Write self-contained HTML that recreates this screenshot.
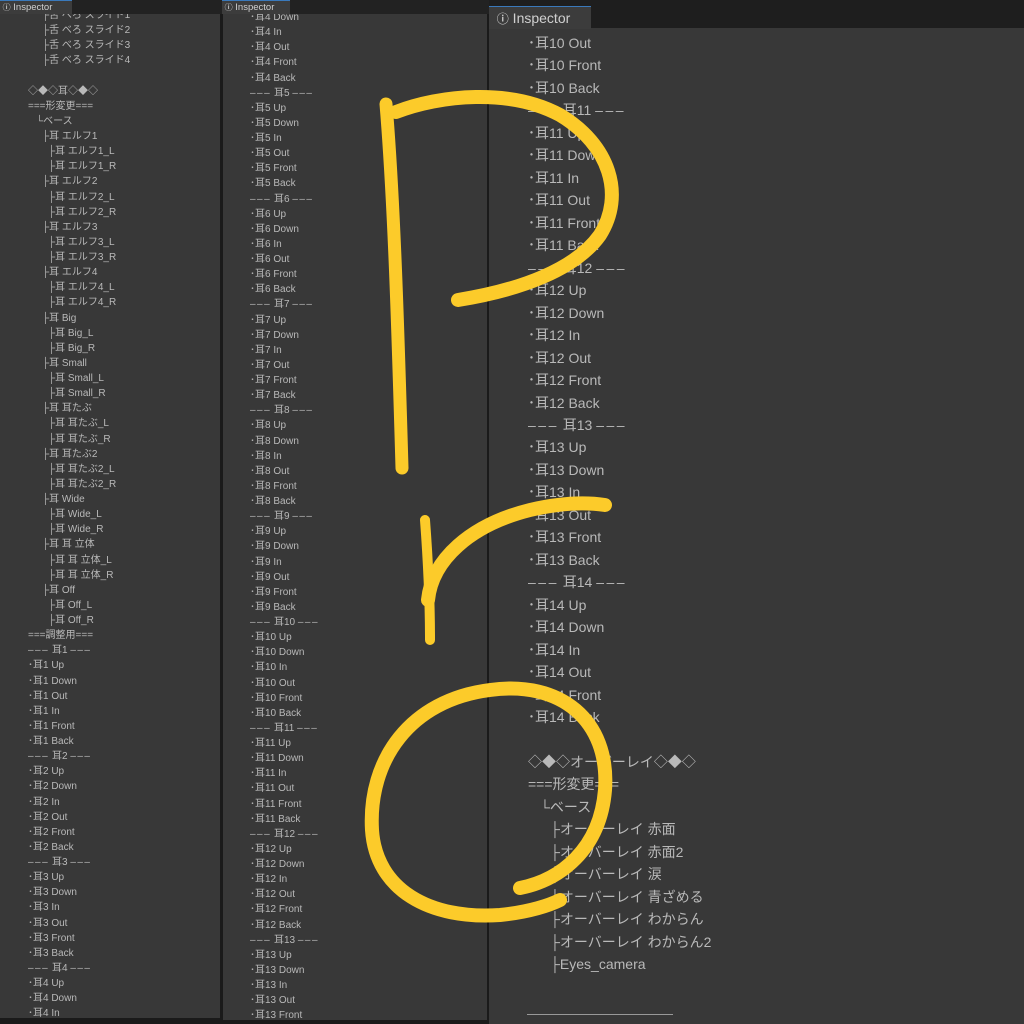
<!DOCTYPE html>
<html><head><meta charset="utf-8"><style>
body{margin:0;width:1024px;height:1024px;background:#1a1a1a;overflow:hidden;position:relative;font-family:"Liberation Sans","Noto Sans CJK JP",sans-serif;color:#b9b9b9}
.p{position:absolute;background:#383838;overflow:hidden}
.tab{position:absolute;background:#3c3c3c;border-top:1px solid #3a79bb;color:#d0d0d0}
.l{position:absolute;white-space:pre;}
.s{font-size:10px;line-height:15.14px}
.b{font-size:14px;line-height:22.47px}
.d{letter-spacing:1.5px}
.b .d{letter-spacing:2.5px}
</style></head><body>
<div class="p" style="left:0;top:0;width:220px;height:1018px"></div>
<div class="p" style="left:223px;top:0;width:264px;height:1020px"></div>
<div class="p" style="left:489px;top:28px;width:535px;height:996px"></div>
<div id="L" class="l s" style="left:0;top:8px"></div>
<div id="M" class="l s" style="left:223px;top:10px"></div>
<div id="R" class="l b" style="left:489px;top:32px"></div>
<div style="position:absolute;left:0;top:0;width:1024px;height:14px;background:#222"></div>
<div style="position:absolute;left:489px;top:0;width:535px;height:28px;background:#1e1e1e"></div>
<div class="tab" style="left:0;top:0;width:72px;height:13px;font-size:9.5px;line-height:14px">&nbsp;<b style="font-size:8px">ⓘ</b> Inspector</div>
<div class="tab" style="left:222px;top:0;width:68px;height:13px;font-size:9.5px;line-height:14px">&nbsp;<b style="font-size:8px">ⓘ</b> Inspector</div>
<div class="tab" style="left:489px;top:6px;width:102px;height:22px;font-size:14px;line-height:22px">&nbsp;&nbsp;<b style="font-size:12px">ⓘ</b> Inspector</div>
<div style="position:absolute;left:527px;top:1014px;width:146px;height:1px;background:#999"></div>
<script>
function put(id,lines,step){var el=document.getElementById(id),h='';lines.forEach(function(a){h+='<div style="padding-left:'+a[0]+'px;height:'+step+'px">'+a[1]+'</div>';});el.innerHTML=h;}
function hd(e){return '<span class="d">–––</span> 耳'+e+' <span class="d">–––</span>';}
var L=[[42,'├舌 べろ スライド1'],[42,'├舌 べろ スライド2'],[42,'├舌 べろ スライド3'],[42,'├舌 べろ スライド4'],[0,''],[28,'◇◆◇耳◇◆◇'],[28,'===形変更==='],[36,'└ベース']];
['エルフ1','エルフ2','エルフ3','エルフ4','Big','Small','耳たぶ','耳たぶ2','Wide','耳 立体','Off'].forEach(function(n){L.push([42,'├耳 '+n]);L.push([48,'├耳 '+n+'_L']);L.push([48,'├耳 '+n+'_R']);});
L.push([28,'===調整用===']);
L.push([28,hd(1)]);['Up','Down','Out','In','Front','Back'].forEach(function(x){L.push([28,'･耳1 '+x]);});
[2,3].forEach(function(e){L.push([28,hd(e)]);['Up','Down','In','Out','Front','Back'].forEach(function(x){L.push([28,'･耳'+e+' '+x]);});});
L.push([28,hd(4)]);['Up','Down','In'].forEach(function(x){L.push([28,'･耳4 '+x]);});
put('L',L,15.14);
var O=['Up','Down','In','Out','Front','Back'];
var M=[];['Down','In','Out','Front','Back'].forEach(function(x){M.push([27,'･耳4 '+x]);});
for(var e=5;e<=12;e++){M.push([27,hd(e)]);O.forEach(function(x){M.push([27,'･耳'+e+' '+x]);});}
M.push([27,hd(13)]);['Up','Down','In','Out','Front'].forEach(function(x){M.push([27,'･耳13 '+x]);});
put('M',M,15.14);
var R=[];['Out','Front','Back'].forEach(function(x){R.push([39,'･耳10 '+x]);});
for(var e=11;e<=14;e++){R.push([39,hd(e)]);O.forEach(function(x){R.push([39,'･耳'+e+' '+x]);});}
R.push([0,'']);R.push([39,'◇◆◇オーバーレイ◇◆◇']);R.push([39,'===形変更===']);R.push([51,'└ベース']);
['オーバーレイ 赤面','オーバーレイ 赤面2','オーバーレイ 涙','オーバーレイ 青ざめる','オーバーレイ わからん','オーバーレイ わからん2','Eyes_camera'].forEach(function(x){R.push([61,'├'+x]);});
put('R',R,22.47);
</script>
<svg style="position:absolute;left:0;top:0" width="1024" height="1024" fill="none" stroke="#fccb2a" stroke-linecap="round" stroke-linejoin="round">
<path d="M386 104 C394 200 398 330 402 468" stroke-width="13"/>
<path d="M396 112 C440 95 510 88 560 115 C610 145 625 195 600 235 C575 270 520 290 458 300" stroke-width="14"/>
<path d="M425 520 C428 560 430 600 430 640" stroke-width="10"/>
<path d="M428 600 C432 560 470 525 530 510 C560 503 585 502 605 505" stroke-width="14"/>
<path d="M520 888 C560 880 600 850 605 790 C610 720 560 680 490 690 C410 700 368 760 372 830 C376 890 430 920 500 915 C530 912 550 905 560 900" stroke-width="14"/>
</svg>
</body></html>
